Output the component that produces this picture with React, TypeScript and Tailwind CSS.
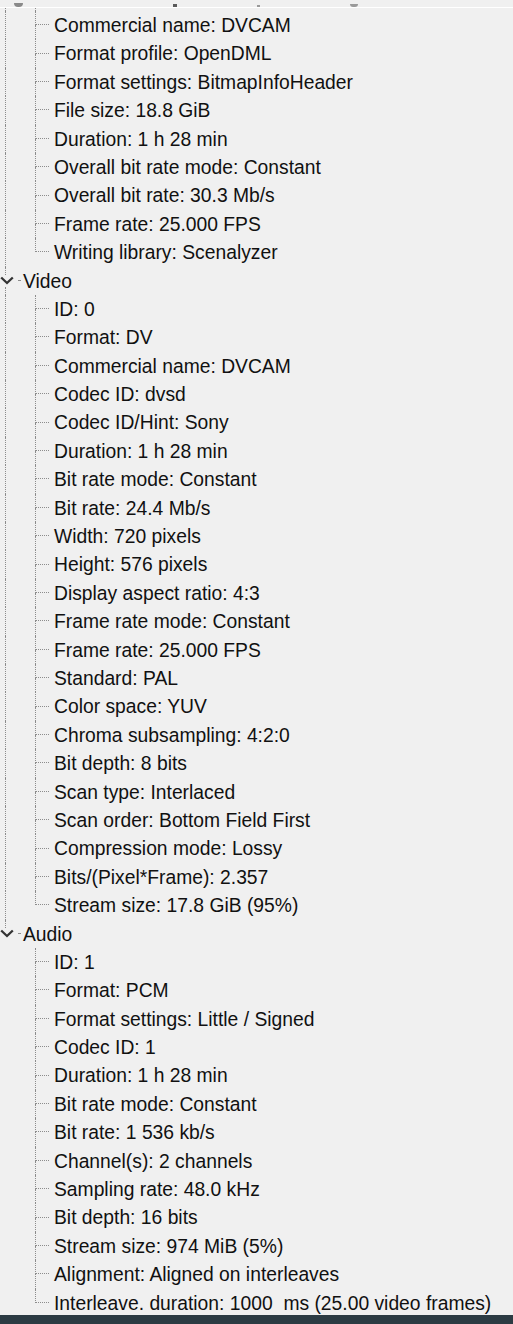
import type { ReactNode } from 'react';

type Group = {
  title?: string;
  items: string[];
};

const GROUPS: Group[] = [
  {
    items: [
      'Commercial name: DVCAM',
      'Format profile: OpenDML',
      'Format settings: BitmapInfoHeader',
      'File size: 18.8 GiB',
      'Duration: 1 h 28 min',
      'Overall bit rate mode: Constant',
      'Overall bit rate: 30.3 Mb/s',
      'Frame rate: 25.000 FPS',
      'Writing library: Scenalyzer',
    ],
  },
  {
    title: 'Video',
    items: [
      'ID: 0',
      'Format: DV',
      'Commercial name: DVCAM',
      'Codec ID: dvsd',
      'Codec ID/Hint: Sony',
      'Duration: 1 h 28 min',
      'Bit rate mode: Constant',
      'Bit rate: 24.4 Mb/s',
      'Width: 720 pixels',
      'Height: 576 pixels',
      'Display aspect ratio: 4:3',
      'Frame rate mode: Constant',
      'Frame rate: 25.000 FPS',
      'Standard: PAL',
      'Color space: YUV',
      'Chroma subsampling: 4:2:0',
      'Bit depth: 8 bits',
      'Scan type: Interlaced',
      'Scan order: Bottom Field First',
      'Compression mode: Lossy',
      'Bits/(Pixel*Frame): 2.357',
      'Stream size: 17.8 GiB (95%)',
    ],
  },
  {
    title: 'Audio',
    items: [
      'ID: 1',
      'Format: PCM',
      'Format settings: Little / Signed',
      'Codec ID: 1',
      'Duration: 1 h 28 min',
      'Bit rate mode: Constant',
      'Bit rate: 1 536 kb/s',
      'Channel(s): 2 channels',
      'Sampling rate: 48.0 kHz',
      'Bit depth: 16 bits',
      'Stream size: 974 MiB (5%)',
      'Alignment: Aligned on interleaves',
      'Interleave. duration: 1000  ms (25.00 video frames)',
    ],
  },
];

const DOT = 'border-dotted border-[#8c8c8c]';

function RootCol({ line }: { line: boolean }) {
  return (
    <div className="w-[35px] flex-none h-full">
      {line ? <div className={`ml-[5px] h-full border-l ${DOT}`} /> : null}
    </div>
  );
}

function Row({ children }: { children: ReactNode }) {
  return <div className="flex h-[28.4px] items-stretch">{children}</div>;
}

function Label({ text }: { text: string }) {
  return <span className="leading-[30px] whitespace-pre">{text}</span>;
}

function Leaf({ text, rootLine, last }: { text: string; rootLine: boolean; last: boolean }) {
  return (
    <Row>
      <RootCol line={rootLine} />
      <div className="w-[19px] flex-none flex flex-col">
        <div className={`h-1/2 w-[14px] border-l border-b ${DOT}`} />
        <div className={`flex-1 ${last ? '' : `border-l ${DOT}`}`} />
      </div>
      <Label text={text} />
    </Row>
  );
}

function Header({ title, last }: { title: string; last: boolean }) {
  return (
    <Row>
      <div className="w-[18px] flex-none flex flex-col">
        <div className={`ml-[5px] h-[8px] border-l ${DOT}`} />
        <svg width="14" height="9" viewBox="0 0 14 9" className="mt-[1px] flex-none">
          <path d="M1.2 1.5 L7 7 L12.8 1.5" fill="none" stroke="#333" strokeWidth="2.3" />
        </svg>
        <div className={`ml-[5px] flex-1 mt-[2px] ${last ? '' : `border-l ${DOT}`}`} />
      </div>
      <div className="w-[5px] flex-none flex flex-col">
        <div className={`h-1/2 w-[2px] border-b ${DOT}`} />
      </div>
      <Label text={title} />
    </Row>
  );
}

export default function App() {
  return (
    <div
      className="h-[1324px] w-[513px] overflow-hidden flex flex-col bg-[#f0f0f0] text-[19.3px] text-[#111]"
      style={{ fontFamily: '"Liberation Sans", Arial, sans-serif' }}
    >
      {/* clipped toolbar strip above the tree */}
      <div className="h-[7px] flex-none overflow-hidden">
        <div className="flex items-end h-full pl-[14px]">
          <div className="w-[9px] h-[4px] rounded-b bg-[#8a8a8a]" />
          <div className="ml-[150px] w-[4px] h-[3px] bg-[#5a5a5a]" />
          <div className="ml-[80px] w-[3px] h-[2px] bg-[#9a9a9a]" />
          <div className="ml-[90px] w-[8px] h-[3px] rounded-b bg-[#9a9a9a]" />
        </div>
      </div>
      <div className="h-px flex-none bg-white" />

      <div className="flex-1 overflow-hidden">
        <div className="flex h-[3px]">
          <RootCol line />
          <div className={`border-l ${DOT}`} />
        </div>
        {GROUPS.map((g, gi) => {
          const lastGroup = gi === GROUPS.length - 1;
          return (
            <div key={gi}>
              {g.title ? <Header title={g.title} last={lastGroup} /> : null}
              {g.items.map((it, i) => (
                <Leaf key={i} text={it} rootLine={!lastGroup} last={i === g.items.length - 1} />
              ))}
            </div>
          );
        })}
      </div>

      <div className="h-[9px] flex-none bg-[#2c3b43]" />
    </div>
  );
}
